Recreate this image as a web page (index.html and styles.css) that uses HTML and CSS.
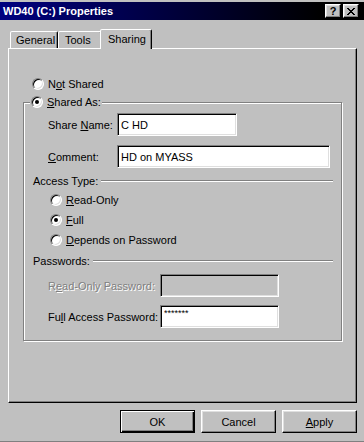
FILE: index.html
```html
<!DOCTYPE html>
<html>

<head>
    <title>WD40 (C:) Properties</title>
    <link rel="stylesheet" href="styles.css">
</head>

<body>
    <div class="window">
        <div class="titlebar">
            <span class="title">WD40 (C:) Properties</span>
            <div class="title-buttons">
                <span class="tbtn help">?</span>
                <span class="tbtn">
                    <svg width="8" height="7" viewBox="0 0 8 7" shape-rendering="crispEdges">
                        <path fill="#000" d="M0 0h2v1H0z M6 0h2v1H6z M1 1h2v1H1z M5 1h2v1H5z M2 2h4v1H2z M3 3h2v1H3z M2 4h4v1H2z M1 5h2v1H1z M5 5h2v1H5z M0 6h2v1H0z M6 6h2v1H6z"/>
                    </svg>
                </span>
            </div>
        </div>

        <div class="tabs">
            <div class="tab tab-general">General</div>
            <div class="tab tab-tools">Tools</div>
            <div class="tab tab-sharing selected">Sharing</div>
        </div>

        <div class="panel">
            <div class="option top-option">
                <span class="radio"></span>
                <span>N<u>o</u>t Shared</span>
            </div>

            <fieldset class="group">
                <legend class="option">
                    <span class="radio checked"></span>
                    <span><u>S</u>hared As:</span>
                </legend>

                <div class="field first">
                    <label class="label">Share <u>N</u>ame:</label>
                    <input class="textbox name-box" type="text" value="C HD">
                </div>
                <div class="field">
                    <label class="label"><u>C</u>omment:</label>
                    <input class="textbox comment-box" type="text" value="HD on MYASS">
                </div>

                <div class="sep sep-access">
                    <span>Access Type:</span>
                    <span class="line"></span>
                </div>
                <div class="choices">
                    <div class="option choice">
                        <span class="radio"></span>
                        <span><u>R</u>ead-Only</span>
                    </div>
                    <div class="option choice">
                        <span class="radio checked"></span>
                        <span><u>F</u>ull</span>
                    </div>
                    <div class="option choice">
                        <span class="radio"></span>
                        <span><u>D</u>epends on Password</span>
                    </div>
                </div>

                <div class="sep sep-pass">
                    <span>Passwords:</span>
                    <span class="line"></span>
                </div>
                <div class="field pass first-pass">
                    <label class="label wide disabled">R<u>e</u>ad-Only Password:</label>
                    <input class="textbox pass-box off" type="text" value="" disabled>
                </div>
                <div class="field pass">
                    <label class="label wide">Fu<u>l</u>l Access Password:</label>
                    <input class="textbox pass-box stars" type="text" value="*******">
                </div>
            </fieldset>
        </div>

        <div class="buttons">
            <button class="btn default">OK</button>
            <button class="btn">Cancel</button>
            <button class="btn"><u>A</u>pply</button>
        </div>
    </div>
</body>

</html>
```

FILE: styles.css
```css
body {
    margin: 0;
    background: #c0c0c0;
    font-family: "Liberation Sans", Arial, sans-serif;
    font-size: 11px;
    color: #000;
}

.window {
    width: 364px;
    height: 442px;
    box-sizing: border-box;
    padding-top: 2px;
    background: #c0c0c0;
    border-bottom: 1px solid #808080;
    overflow: hidden;
}

/* title bar */
.titlebar {
    height: 18px;
    display: flex;
    align-items: center;
    padding: 0 5px 0 3px;
    background: linear-gradient(to right, #000080, #000000 88%);
    color: #fff;
    font-weight: bold;
}

.title-buttons {
    margin-left: auto;
    display: flex;
    gap: 2px;
}

.tbtn {
    width: 16px;
    height: 14px;
    box-sizing: border-box;
    display: flex;
    align-items: center;
    justify-content: center;
    background: #c0c0c0;
    border: 1px solid;
    border-color: #fff #000 #000 #fff;
    box-shadow: inset -1px -1px #808080, inset 1px 1px #dfdfdf;
    color: #000;
}

.help {
    font-size: 11px;
    font-weight: bold;
    line-height: 12px;
}

/* tabs */
.tabs {
    display: flex;
    align-items: flex-end;
    height: 19px;
    margin: 9px 0 0 10px;
}

.tab {
    height: 17px;
    box-sizing: border-box;
    padding: 2px 0 0 5px;
    border: 1px solid;
    border-bottom: none;
    border-color: #fff #000 transparent #fff;
    border-radius: 2px 2px 0 0;
    box-shadow: inset -1px 0 #808080;
    background: #c0c0c0;
}

.tab-general { width: 48px; }
.tab-tools { width: 44px; padding-left: 6px; }

.tab.selected {
    width: 52px;
    height: 20px;
    margin: 0 -2px -1px -2px;
    padding: 3px 0 0 7px;
    position: relative;
    z-index: 1;
}

/* tab page */
.panel {
    width: 349px;
    height: 355px;
    margin-left: 8px;
    box-sizing: border-box;
    border: 1px solid;
    border-color: #fff #000 #000 #fff;
    box-shadow: inset -1px -1px #808080;
    padding: 27px 0 0 14px;
}

.option {
    display: flex;
    align-items: center;
    gap: 4px;
    height: 16px;
}

.top-option {
    margin-left: 9px;
}

.radio {
    width: 12px;
    height: 12px;
    box-sizing: border-box;
    border-radius: 50%;
    border: 1px solid;
    border-color: #808080 #fff #fff #808080;
    box-shadow: inset 1px 1px #000, inset -1px -1px #dfdfdf;
    background: #fff;
    display: flex;
    align-items: center;
    justify-content: center;
    flex: none;
}

.radio.checked::after {
    content: "";
    width: 4px;
    height: 4px;
    border-radius: 50%;
    background: #000;
}

.group {
    width: 319px;
    box-sizing: border-box;
    margin: 2px 0 0 0;
    padding: 0 0 12px 0;
    min-width: 0;
    border: 1px solid #808080;
    box-shadow: 1px 1px 0 #fff, inset 1px 1px 0 #fff;
}

.group legend {
    margin-left: 6px;
    padding: 0 1px;
    background: #c0c0c0;
}

.field {
    display: flex;
    align-items: center;
    padding-left: 24px;
    margin-top: 9px;
}

.field.first {
    margin-top: 3px;
}

.label {
    width: 69px;
    flex: none;
}

.label.wide {
    width: 112px;
}

.disabled {
    color: #808080;
    text-shadow: 1px 1px 0 #fff;
}

.textbox {
    height: 23px;
    box-sizing: border-box;
    margin: 0;
    padding: 0 0 0 3px;
    border: 1px solid;
    border-color: #808080 #fff #fff #808080;
    box-shadow: inset 1px 1px #000, inset -1px -1px #dfdfdf;
    background: #fff;
    font-family: "Liberation Sans", Arial, sans-serif;
    font-size: 11px;
    color: #000;
    outline: none;
}

.name-box { width: 120px; }
.comment-box { width: 213px; }
.pass-box { width: 119px; }

.textbox.off {
    background: #c0c0c0;
}

.stars {
    font-size: 9px;
    padding-bottom: 7px;
}

.sep {
    display: flex;
    align-items: center;
    height: 14px;
    margin: 6px 8px 0 9px;
}

.sep-pass {
    margin-top: 4px;
}

.line {
    flex: 1;
    height: 0;
    margin-left: 3px;
    border-top: 1px solid #808080;
    border-bottom: 1px solid #fff;
}

.choices {
    margin-top: 2px;
    padding-left: 26px;
}

.choice {
    height: 20px;
}

.field.pass {
    margin-top: 8px;
}

.field.first-pass {
    margin-top: 6px;
}

/* dialog buttons */
.buttons {
    display: flex;
    justify-content: flex-end;
    gap: 6px;
    margin-top: 7px;
    padding-right: 7px;
}

.btn {
    width: 75px;
    height: 23px;
    box-sizing: border-box;
    padding: 0;
    background: #c0c0c0;
    border: 1px solid;
    border-color: #fff #000 #000 #fff;
    box-shadow: inset -1px -1px #808080, inset 1px 1px #dfdfdf;
    font-family: "Liberation Sans", Arial, sans-serif;
    font-size: 11px;
    color: #000;
}

.btn.default {
    border-color: #000;
    box-shadow: inset 1px 1px #fff, inset -1px -1px #000, inset -2px -2px #808080;
}
```
